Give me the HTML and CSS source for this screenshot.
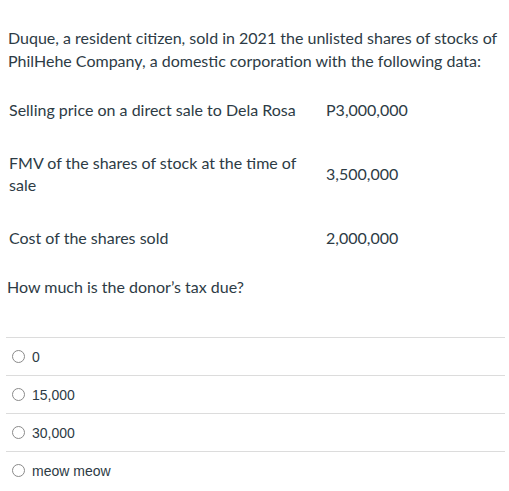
FILE: index.html
```html
<!DOCTYPE html>
<html>
<head>
<meta charset="utf-8">
<link rel="stylesheet" href="styles.css">
</head>
<body>
<div class="question">
  <p class="intro">Duque, a resident citizen, sold in 2021 the unlisted shares of stocks of PhilHehe Company, a domestic corporation with the following data:</p>
  <table class="data">
    <tr><td class="label">Selling price on a direct sale to Dela Rosa</td><td class="value">P3,000,000</td></tr>
    <tr><td class="label">FMV of the shares of stock at the time of sale</td><td class="value">3,500,000</td></tr>
    <tr><td class="label">Cost of the shares sold</td><td class="value">2,000,000</td></tr>
  </table>
  <p class="ask">How much is the donor’s tax due?</p>
  <div class="answers">
    <label class="answer"><span class="radio"></span><span class="atext">0</span></label>
    <label class="answer"><span class="radio"></span><span class="atext">15,000</span></label>
    <label class="answer"><span class="radio"></span><span class="atext">30,000</span></label>
    <label class="answer"><span class="radio"></span><span class="atext">meow meow</span></label>
  </div>
</div>
</body>
</html>
```
FILE: styles.css
```css
html, body { margin: 0; padding: 0; background: #fff; }
body {
  font-family: Lato, "Liberation Sans", sans-serif;
  color: #2d3b45;
  font-size: 16px;
}
.question { padding: 26px 4px 0 6px; }
.intro {
  margin: 0 0 0 2px;
  line-height: 23px;
}
.data {
  border-collapse: collapse;
  margin-top: 11px;
}
.data td {
  padding: 16px 0 15px 0;
  line-height: 22px;
  vertical-align: middle;
}
.data .label { width: 300px; padding-left: 3px; padding-right: 17px; }
.data .value { padding-left: 0; }
.ask {
  margin: 12px 0 0 1px;
  line-height: 22px;
}
.answers { margin-top: 39px; }
.answer {
  display: flex;
  align-items: center;
  gap: 7px;
  height: 37px;
  border-top: 1px solid #dcdcdc;
  font-family: "Liberation Sans", Arial, sans-serif;
  font-size: 14px;
  color: #2d3b45;
  padding-left: 6px;
}
.radio {
  width: 11px; height: 11px;
  border: 1px solid #8a8a8a;
  border-radius: 50%;
  background: #fff;
  box-sizing: content-box;
}
.atext { line-height: 16px; }
```
